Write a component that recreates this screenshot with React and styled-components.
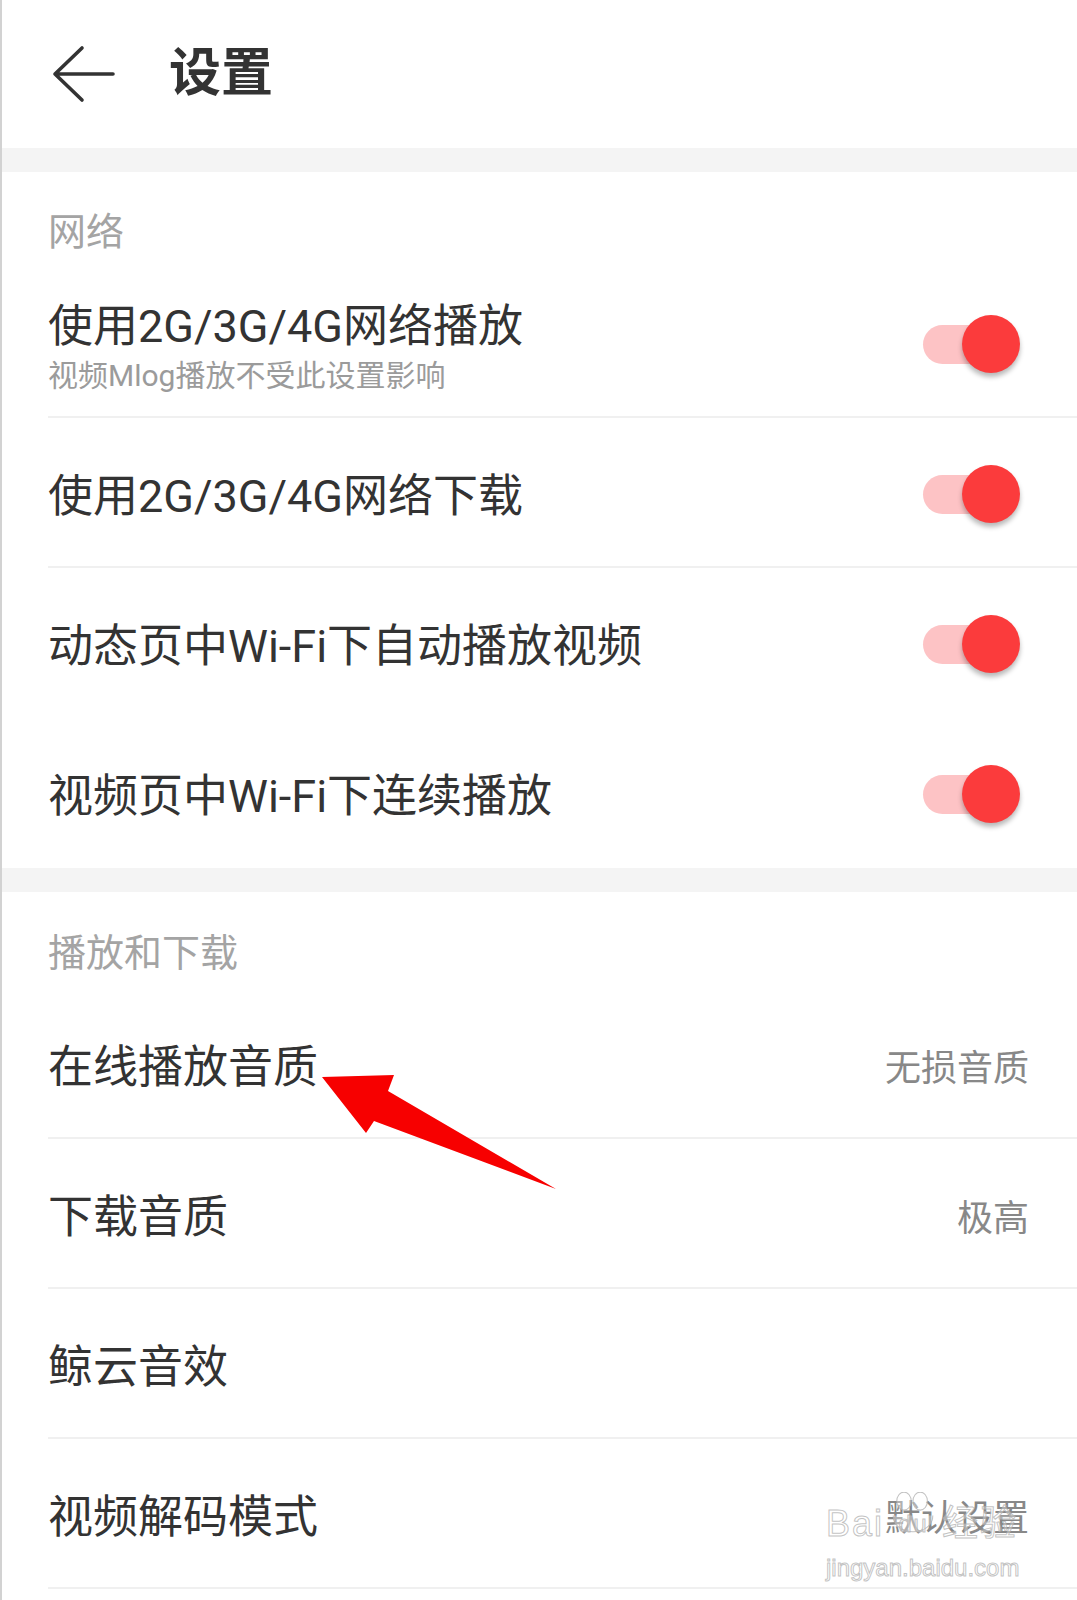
import styled, { createGlobalStyle } from "styled-components";

const GlobalStyle = createGlobalStyle`
  * {
    box-sizing: border-box;
  }
  body {
    margin: 0;
    background: #fff;
    font-family: Roboto, "Noto Sans CJK SC", sans-serif;
  }
`;

const networkRows = [
  { title: "使用2G/3G/4G网络播放", sub: "视频Mlog播放不受此设置影响", divider: true },
  { title: "使用2G/3G/4G网络下载", divider: true },
  { title: "动态页中Wi-Fi下自动播放视频" },
  { title: "视频页中Wi-Fi下连续播放" },
];

const playRows = [
  { title: "在线播放音质", value: "无损音质" },
  { title: "下载音质", value: "极高" },
  { title: "鲸云音效" },
  { title: "视频解码模式", value: "默认设置" },
];

function Switch() {
  return (
    <SwitchBox>
      <SwitchTrack />
      <SwitchKnob />
    </SwitchBox>
  );
}

function App() {
  return (
    <Page>
      <GlobalStyle />
      <Header>
        <BackButton aria-label="返回">
          <svg width="64" height="58" viewBox="0 0 64 58" fill="none">
            <path
              d="M30 3 L3 29 L30 55 M3 29 H61"
              stroke="#333"
              strokeWidth="3.6"
              strokeLinecap="round"
              strokeLinejoin="round"
            />
          </svg>
        </BackButton>
        <Title>设置</Title>
      </Header>

      <Gap />
      <SectionLabel>网络</SectionLabel>
      {networkRows.map((row) => (
        <Row key={row.title} $divider={row.divider} $tall={!!row.sub}>
          <RowText $shift={row.sub ? 12 : 9}>
            <RowTitle>{row.title}</RowTitle>
            {row.sub && <RowSub>{row.sub}</RowSub>}
          </RowText>
          <Switch />
        </Row>
      ))}

      <Gap />
      <SectionLabel $second>播放和下载</SectionLabel>
      {playRows.map((row) => (
        <Row key={row.title} $divider>
          <RowText $shift={9}>
            <RowTitle>{row.title}</RowTitle>
          </RowText>
          {row.value && <Value>{row.value}</Value>}
        </Row>
      ))}

      <Arrow viewBox="0 0 1077 1600" width="1077" height="1600">
        <polygon
          points="322,1077 394,1075 388,1091 556,1189 374,1121 366,1133"
          fill="#f70000"
        />
      </Arrow>

      <Watermark>
        <WmLine>
          <span>Bai</span>
          <Paw viewBox="0 0 60 62" width="54" height="56">
            <ellipse cx="20" cy="10" rx="8" ry="10" />
            <ellipse cx="38" cy="10" rx="8" ry="10" />
            <path d="M8 26 C8 50 52 50 52 26" />
            <text x="14" y="44">du</text>
          </Paw>
          <span>经验</span>
        </WmLine>
        <WmUrl>jingyan.baidu.com</WmUrl>
      </Watermark>
    </Page>
  );
}

const Page = styled.div`
  position: relative;
  width: 1077px;
  min-height: 1600px;
  background: #fff;
  border-left: 2px solid #d2d2d2;
  overflow: hidden;
`;

const Header = styled.header`
  display: flex;
  align-items: center;
  height: 148px;
  padding-left: 50px;
`;

const BackButton = styled.button`
  display: flex;
  padding: 0;
  border: none;
  background: none;
`;

const Title = styled.h1`
  margin: 0 0 0 53px;
  font-size: 52px;
  font-weight: 700;
  color: #333;
  line-height: 1;
`;

const Gap = styled.div`
  height: 24px;
  background: #f4f4f4;
`;

const SectionLabel = styled.div`
  display: flex;
  align-items: center;
  height: ${(p) => (p.$second ? 97 : 95)}px;
  padding: 18px 0 0 46px;
  font-size: 38px;
  color: #a4a4a4;
`;

const Row = styled.div`
  display: flex;
  align-items: center;
  justify-content: space-between;
  height: ${(p) => (p.$tall ? 151 : 150)}px;
  margin-left: 46px;
  padding-right: 48px;
  border-bottom: 2px solid ${(p) => (p.$divider ? "#f0f0f0" : "transparent")};
`;

const RowText = styled.div`
  display: flex;
  flex-direction: column;
  margin-top: ${(p) => p.$shift}px;
`;

const RowTitle = styled.div`
  font-size: 45px;
  line-height: 50px;
  color: #333;
`;

const RowSub = styled.div`
  margin-top: 6px;
  font-size: 30px;
  line-height: 36px;
  color: #9b9b9b;
`;

const Value = styled.div`
  margin-top: 4px;
  font-size: 36px;
  color: #888;
`;

const SwitchBox = styled.div`
  position: relative;
  width: 97px;
  height: 58px;
  margin: 4px 9px 0 0;
`;

const SwitchTrack = styled.div`
  position: absolute;
  left: 0;
  top: 10px;
  width: 74px;
  height: 39px;
  border-radius: 20px;
  background: #fdc3c5;
`;

const SwitchKnob = styled.div`
  position: absolute;
  right: 0;
  top: 0;
  width: 58px;
  height: 58px;
  border-radius: 50%;
  background: #fb3b3c;
  box-shadow: 0 4px 5px rgba(0, 0, 0, 0.28);
`;

const Arrow = styled.svg`
  position: absolute;
  left: -2px;
  top: 0;
  pointer-events: none;
`;

const Watermark = styled.div`
  position: absolute;
  left: 824px;
  top: 1492px;
  display: flex;
  flex-direction: column;
  align-items: flex-start;
  color: rgba(255, 255, 255, 0.35);
  -webkit-text-stroke: 1px rgba(175, 175, 175, 0.75);
  font-family: "Liberation Sans", "Noto Sans CJK SC", sans-serif;
  pointer-events: none;
`;

const WmLine = styled.div`
  display: flex;
  align-items: flex-end;
  font-size: 36px;
  line-height: 40px;
  letter-spacing: 2px;
`;

const Paw = styled.svg`
  margin: 0 2px -4px;
  fill: rgba(255, 255, 255, 0.35);
  stroke: rgba(175, 175, 175, 0.75);
  stroke-width: 1.2;

  text {
    font-size: 26px;
    font-family: "Liberation Sans", sans-serif;
  }
`;

const WmUrl = styled.div`
  margin-top: 10px;
  font-size: 24px;
  line-height: 28px;
`;

export default App;
